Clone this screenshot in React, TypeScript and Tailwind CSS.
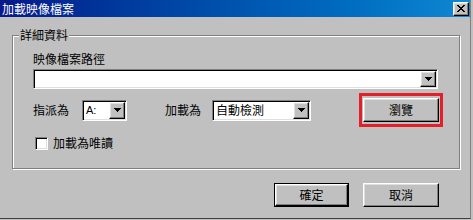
import React from 'react';

const raised =
  'bg-[#c0c0c0] border border-t-white border-l-white border-r-black border-b-black shadow-[inset_-1px_-1px_0_#808080,inset_1px_1px_0_#dfdfdf]';
const sunken =
  'bg-white border border-t-[#808080] border-l-[#808080] border-r-white border-b-white shadow-[inset_1px_1px_0_#000,inset_-1px_-1px_0_#dfdfdf]';

const DownArrow = () => (
  <svg width="7" height="4" viewBox="0 0 7 4" shapeRendering="crispEdges">
    <path d="M0 0h7v1H0zM1 1h5v1H1zM2 2h3v1H2zM3 3h1v1H3z" fill="#000" />
  </svg>
);

const Combo: React.FC<{ className: string; children?: React.ReactNode }> = ({ className, children }) => (
  <div className={`${sunken} flex items-stretch p-[1px] ${className}`}>
    <div className="flex-1 flex items-center pl-[2px] overflow-hidden">{children}</div>
    <div className={`${raised} w-[16px] flex items-center justify-center`}>
      <DownArrow />
    </div>
  </div>
);

const Button: React.FC<{ label: string; isDefault?: boolean }> = ({ label, isDefault }) =>
  isDefault ? (
    <div className="border border-black">
      <button className={`${raised} w-[73px] h-[22px] flex items-center justify-center text-[12px] text-black`}>
        {label}
      </button>
    </div>
  ) : (
    <button className={`${raised} w-[76px] h-[24px] flex items-center justify-center text-[12px] text-black`}>
      {label}
    </button>
  );

export default function App() {
  return (
    <div className="w-[473px] h-[220px] bg-[#c0c0c0] font-['Noto_Sans_CJK_TC','Noto_Sans_CJK_SC',sans-serif] text-[12px] leading-[14px] text-black">
      <div className="w-[471px] h-[219px] flex flex-col border-r border-b border-r-[#808080] border-b-[#404040]">
        {/* title bar */}
        <div className="h-[17px] flex items-center justify-between pl-[2px] pr-[1px] bg-linear-to-r from-[#08188a] to-[#1088d2]">
          <span className="text-white text-[12px] leading-[14px]">加載映像檔案</span>
          <div className={`${raised} w-[16px] h-[14px] flex items-center justify-center`}>
            <svg width="8" height="7" viewBox="0 0 8 7" shapeRendering="crispEdges">
              <path
                d="M0 0h2v1H0zM6 0h2v1H6zM1 1h2v1H1zM5 1h2v1H5zM2 2h4v1H2zM3 3h2v1H3zM2 4h4v1H2zM1 5h2v1H1zM5 5h2v1H5zM0 6h2v1H0zM6 6h2v1H6z"
                fill="#000"
              />
            </svg>
          </div>
        </div>

        {/* group box */}
        <div className="relative mt-[18px] ml-[12px] w-[448px] h-[134px] border border-[#808080] shadow-[inset_1px_1px_0_#fff,1px_1px_0_#fff] pt-[16px] pl-[20px]">
          <span className="absolute left-[6px] top-[-8px] px-[1px] bg-[#c0c0c0]">詳細資料</span>

          <div className="h-[14px]">映像檔案路徑</div>
          <Combo className="mt-[3px] w-[405px] h-[20px]" />

          <div className="mt-[4px] h-[34px] flex items-center">
            <span className="w-[49px]">指派為</span>
            <Combo className="w-[45px] h-[21px]">
              <span className="font-['Liberation_Sans',sans-serif] text-[11px] leading-[12px]">A:</span>
            </Combo>
            <span className="ml-[38px] w-[47px]">加載為</span>
            <Combo className="w-[99px] h-[21px]">
              <span>自動檢測</span>
            </Combo>
            <div className="ml-[48px] border-[3px] border-[#e3202a] px-[1px] py-[2px]">
              <Button label="瀏覽" />
            </div>
          </div>

          <div className="mt-[9px] flex items-center">
            <div className={`${sunken} ml-[2px] w-[13px] h-[13px]`} />
            <span className="ml-[5px]">加載為唯讀</span>
          </div>
        </div>

        {/* dialog buttons */}
        <div className="mt-[14px] flex justify-end gap-[14px] pr-[31px]">
          <Button label="確定" isDefault />
          <Button label="取消" />
        </div>
      </div>
    </div>
  );
}
